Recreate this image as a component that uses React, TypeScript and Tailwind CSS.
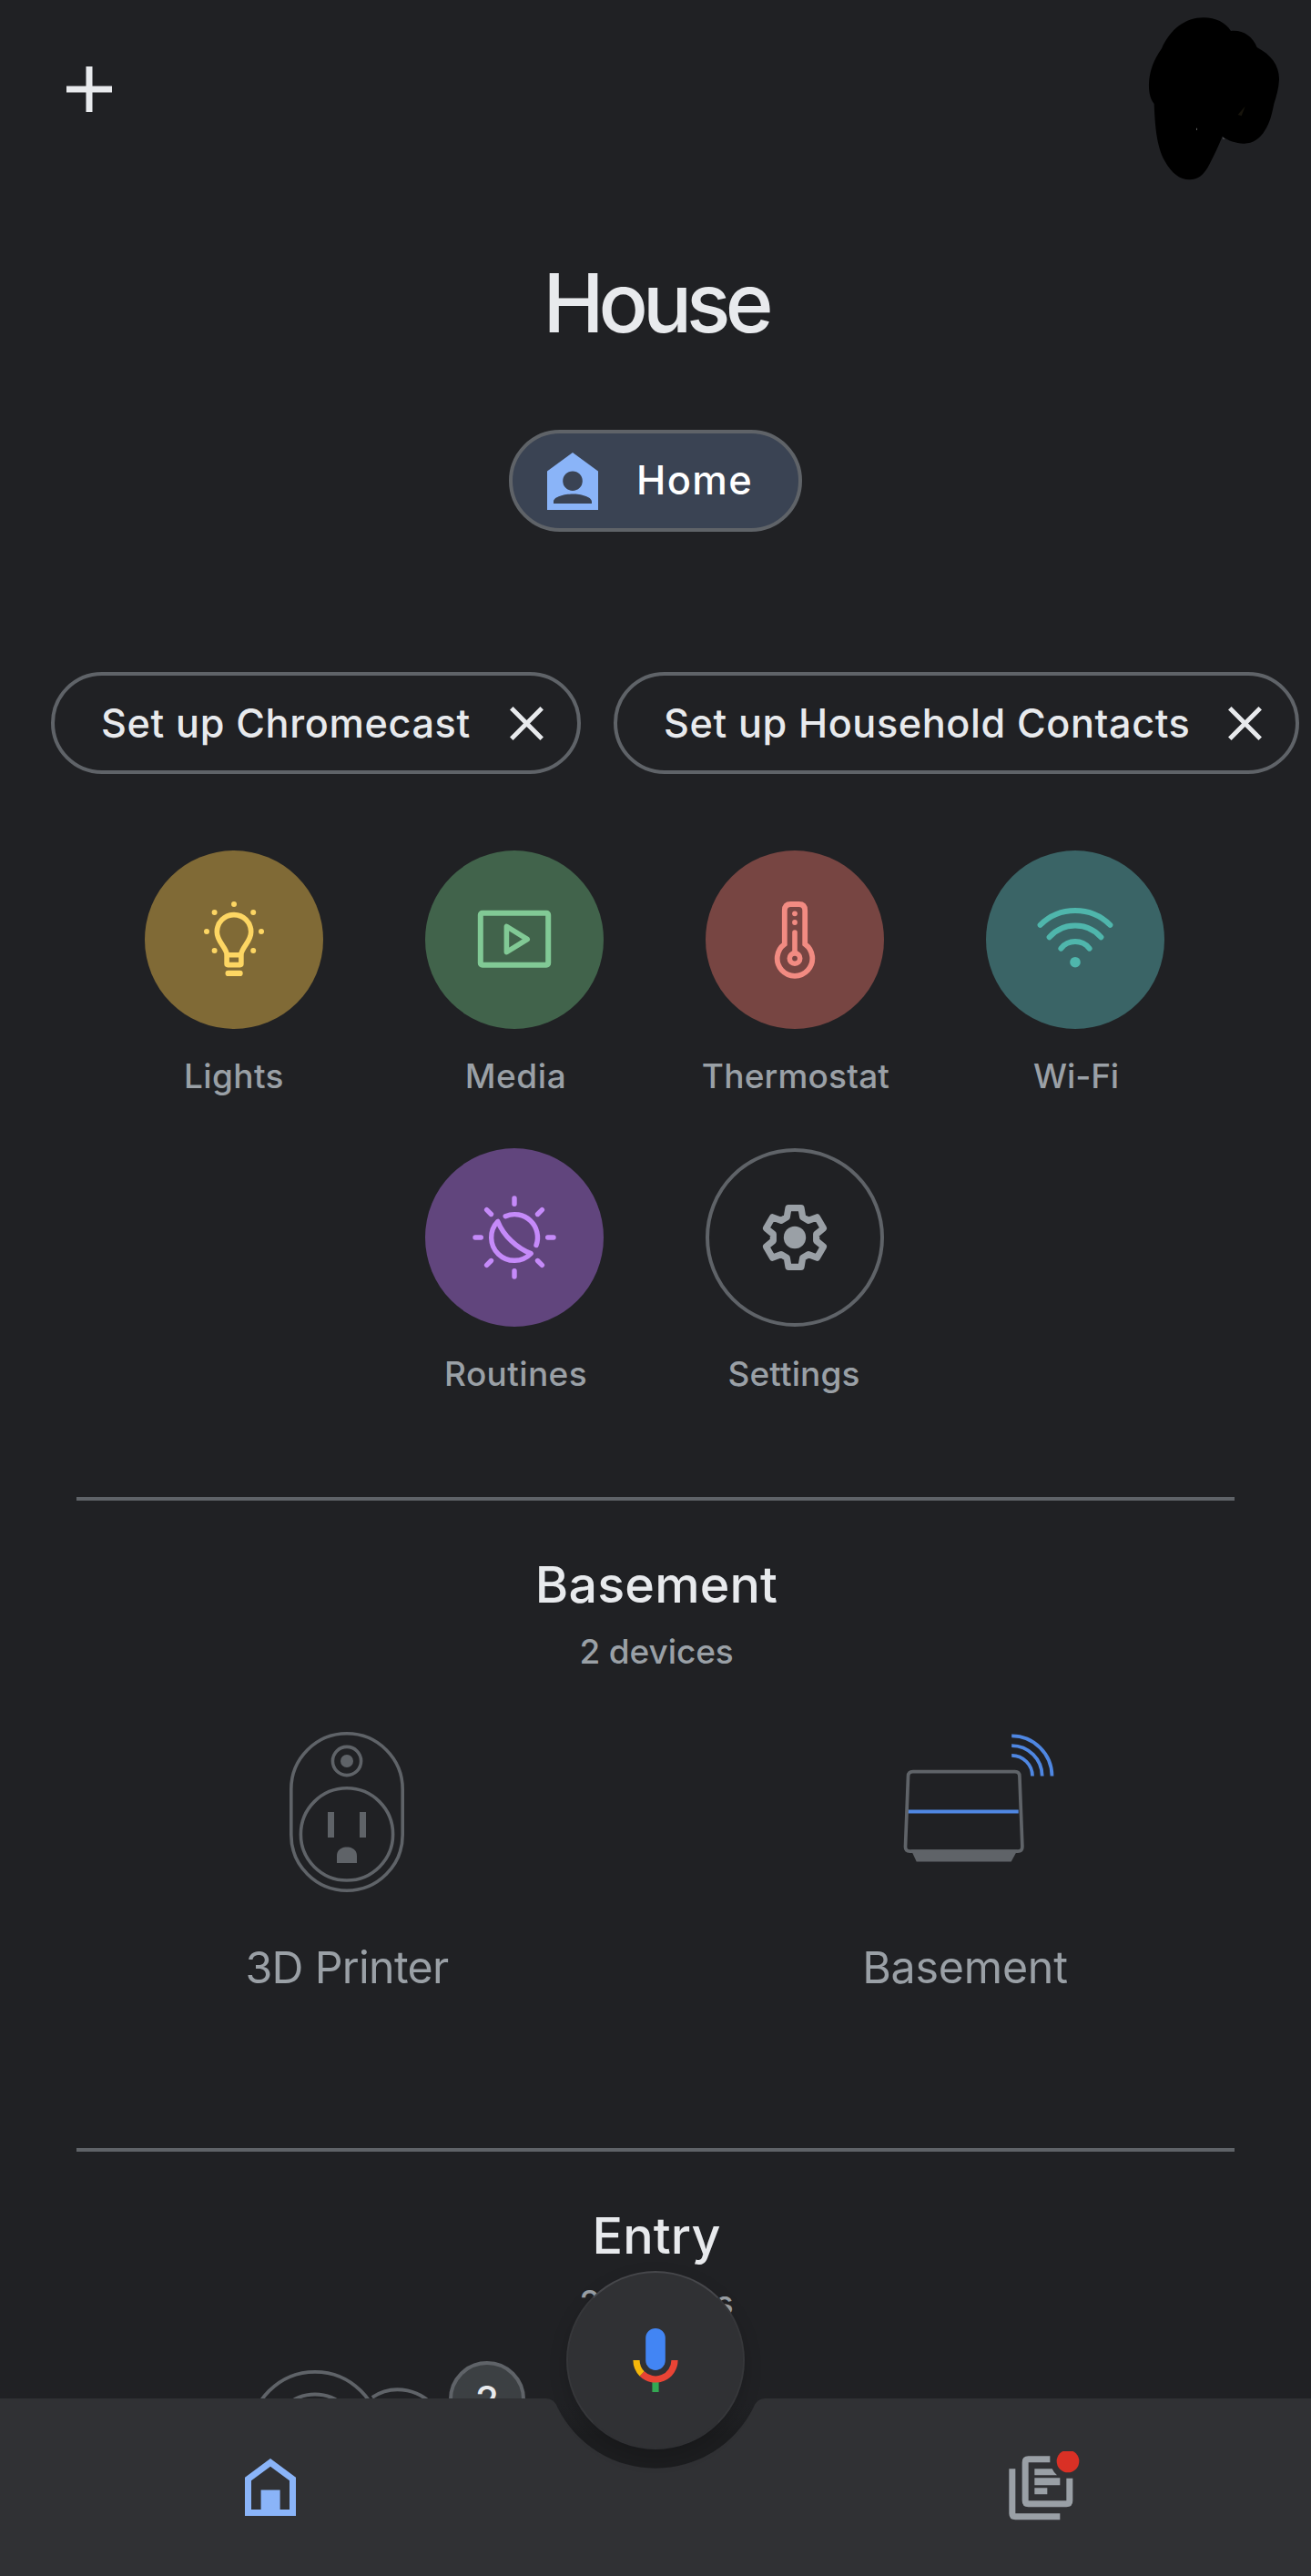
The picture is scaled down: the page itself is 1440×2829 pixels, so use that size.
import type { ReactNode } from 'react';

function PlusIcon() {
  return (
    <svg className="size-[52px]" viewBox="0 0 52 52" stroke="#e8eaed" strokeWidth="7" fill="none">
      <path d="M26 1v50M1 26h50" />
    </svg>
  );
}

function Scribble() {
  return (
    <svg className="absolute left-[1220px] top-0 size-[220px]" viewBox="0 0 660 660">
      <path
        fill="#000"
        d="M168 160C196 96 246 58 306 58C346 58 378 74 396 102C436 98 468 120 482 156C528 180 556 216 555 262C554 290 546 318 538 342C530 382 524 404 508 430C492 458 466 474 438 473C412 472 388 464 368 450C356 478 344 506 326 540C308 576 288 592 260 592C228 592 200 570 178 530C152 484 146 420 143 342C130 326 125 304 126 274C128 230 144 194 168 160Z"
      />
      <path fill="#17140c" d="M443 350l-24 28l12 4z" />
      <path fill="#4a4a4e" d="M368 451l10 7l-8 1z" />
      <path fill="#8a8a8a" d="M282 422h2v7h-2z" />
    </svg>
  );
}

function HomePersonIcon() {
  return (
    <svg className="h-[63px] w-[56px]" viewBox="0 0 56 63">
      <path
        fill="#8ab4f8"
        fillRule="evenodd"
        d="M28 0L56 20.5V63H0V20.5ZM28 20.4a10.8 10.8 0 1 0 0 21.6a10.8 10.8 0 1 0 0-21.6ZM7 56V54C7 48.5 19 45.5 28 45.5S49 48.5 49 54V56Z"
      />
    </svg>
  );
}

function CloseIcon() {
  return (
    <svg className="size-[37px]" viewBox="0 0 37 37" stroke="#e8eaed" strokeWidth="5" fill="none">
      <path d="M1.8 1.8L35.2 35.2M35.2 1.8L1.8 35.2" />
    </svg>
  );
}

function SetupChip({ children, className }: { children: ReactNode; className: string }) {
  return (
    <div
      className={
        'flex h-[112px] shrink-0 items-center justify-between rounded-full border-[4px] border-[#5f6368] pl-[51px] pr-[37px] text-[43.2px] font-medium text-[#e8eaed] ' +
        className
      }
    >
      <span className="whitespace-nowrap">{children}</span>
      <CloseIcon />
    </div>
  );
}

const LightIcon = (
  <svg className="size-[196px]" viewBox="0 0 196 196" fill="none" stroke="#fdd663" strokeWidth="5.6">
    <path d="M90.5 115C89 105 79.3 100.5 79.3 89.3A18.7 18.7 0 0 1 116.7 89.3C116.7 100.5 107 105 105.5 115" />
    <rect x="90.1" y="114.8" width="15.8" height="10.8" rx="1" />
    <path d="M91.6 134.9h13" strokeWidth="6.2" strokeLinecap="round" />
    <g fill="#fdd663" stroke="none">
      <circle cx="98" cy="59" r="3" />
      <circle cx="76.6" cy="68" r="3" />
      <circle cx="119.2" cy="68" r="3" />
      <circle cx="68" cy="89" r="3" />
      <circle cx="128" cy="89" r="3" />
      <circle cx="76.6" cy="110" r="3" />
      <circle cx="119.2" cy="110" r="3" />
    </g>
  </svg>
);

const MediaIcon = (
  <svg className="size-[196px]" viewBox="0 0 196 196" fill="none" stroke="#81c995" strokeWidth="6">
    <rect x="60.8" y="68.7" width="74.4" height="57" rx="2" />
    <path d="M89.4 83.4V111.6L112.2 97.5Z" strokeWidth="5.6" strokeLinejoin="round" />
  </svg>
);

const ThermostatIcon = (
  <svg className="size-[196px]" viewBox="0 0 196 196" fill="none" stroke="#f28b82" strokeWidth="5.8">
    <path d="M86.8 102.8V66Q86.8 59 93.5 59H102.5Q109.2 59 109.2 66V102.8A19.3 19.3 0 1 1 86.8 102.8Z" />
    <path d="M98 90v22" strokeWidth="5.6" strokeLinecap="round" />
    <circle cx="98" cy="118.6" r="5.7" strokeWidth="5.6" />
    <g fill="#f28b82" stroke="none">
      <circle cx="98" cy="69.3" r="2.9" />
      <circle cx="98" cy="79" r="2.9" />
    </g>
  </svg>
);

const WifiIcon = (
  <svg className="size-[196px]" viewBox="0 0 196 196" fill="none" stroke="#4fb6ac" strokeWidth="6" strokeLinecap="round">
    <path d="M59.6 81.8A54.6 54.6 0 0 1 136.4 81.8" />
    <path d="M69.6 95.3A38 38 0 0 1 126.4 95.3" />
    <path d="M82.4 107.6A20 20 0 0 1 113.6 107.6" />
    <circle cx="98" cy="122.7" r="5.8" fill="#4fb6ac" stroke="none" />
  </svg>
);

const RoutinesIcon = (
  <svg
    className="size-[196px]"
    viewBox="0 0 196 196"
    fill="none"
    stroke="#c58af9"
    strokeWidth="5.4"
    strokeLinecap="round"
    strokeLinejoin="round"
  >
    <path d="M98 55v6.3M98 134.7v6.3M55 98h6.3M134.7 98h6.3M67.6 67.6l4.9 4.9M123.5 123.5l4.9 4.9M128.4 67.6l-4.9 4.9M72.5 123.5l-4.9 4.9" />
    <path d="M88.2 74.7A25.3 25.3 0 0 1 122 106.5" />
    <path d="M79.8 80.4A25.3 25.3 0 1 0 116.2 115.6C101 110 86 96 79.8 80.4Z" />
  </svg>
);

const gearTooth = [
  [-8.7, -22.3],
  [-7, -32.3],
  [7, -32.3],
  [8.7, -22.3],
];

const gearPoints = [0, 60, 120, 180, 240, 300]
  .flatMap((deg) => {
    const a = (deg * Math.PI) / 180;
    return gearTooth.map(([x, y]) => {
      const px = 98 + x * Math.cos(a) - y * Math.sin(a);
      const py = 98 + x * Math.sin(a) + y * Math.cos(a);
      return px.toFixed(2) + ',' + py.toFixed(2);
    });
  })
  .join(' ');

const SettingsIcon = (
  <svg className="size-[196px] shrink-0" viewBox="0 0 196 196" fill="none" stroke="#9aa0a6" strokeWidth="7.2" strokeLinejoin="round">
    <polygon points={gearPoints} />
    <circle cx="98" cy="98" r="12.2" fill="#9aa0a6" stroke="none" />
  </svg>
);

function Action({ circle, label, tracking, icon }: { circle: string; label: string; tracking: string; icon: ReactNode }) {
  return (
    <div className="flex h-[327px] w-[308px] flex-col items-center">
      <div className={'flex size-[196px] items-center justify-center rounded-full ' + circle}>{icon}</div>
      <span className={'mt-[30px] text-[37px] font-medium leading-[44px] text-[#9aa0a6] ' + tracking}>{label}</span>
    </div>
  );
}

function OutletIcon() {
  return (
    <svg className="h-[176px] w-[126px]" viewBox="0 0 126 176" fill="none" stroke="#5f6368" strokeWidth="3.6">
      <rect x="1.8" y="1.8" width="122.4" height="172.4" rx="61.2" />
      <circle cx="63" cy="32" r="15.6" />
      <circle cx="63" cy="112.4" r="50.6" />
      <g fill="#5f6368" stroke="none">
        <circle cx="63" cy="32" r="7" />
        <path d="M42 88h7v28h-7zM77 88h7v28h-7zM52 144v-8C52 129.500 57 126.400 63 126.400S74 129.500 74 136V144Z" />
      </g>
    </svg>
  );
}

function RouterIcon() {
  return (
    <svg className="h-[176px] w-[200px]" viewBox="-0.7 -0.6 200 176" fill="none" strokeWidth="3.7">
      <path d="M37 87h122" stroke="#4f87e2" strokeWidth="4" />
      <path stroke="#5f6368" d="M43 43H155.200Q160 43 160.200 48L163.200 125.500Q163.300 130.500 158.300 130.500H39.700Q34.700 130.500 34.800 125.500L37.800 48Q38 43 43 43Z" />
      <path fill="#5f6368" d="M41 129h117l-7 13H47z" />
      <g stroke="#4f87e2" strokeWidth="3.8">
        <path d="M151.500 3.800A44.300 44.300 0 0 1 195.800 48" />
        <path d="M151.500 14.500A33.500 33.500 0 0 1 185 48" />
        <path d="M151.500 25.200A22.800 22.800 0 0 1 174.300 48" />
      </g>
    </svg>
  );
}

function Device({ label, tracking, children }: { label: string; tracking: string; children: ReactNode }) {
  return (
    <div className="flex flex-col items-center">
      {children}
      <span className={'mt-[53px] text-[48.3px] leading-[60px] text-[#9aa0a6] ' + tracking}>{label}</span>
    </div>
  );
}

function RoomHeading({ name, count }: { name: string; count: string }) {
  return (
    <div className="flex flex-col items-center border-t-4 border-[#5f6368] pl-[2px] pt-[57px]">
      <h2 className="text-[55.6px] font-medium leading-[70px] tracking-[0.003em] text-[#e8eaed]">{name}</h2>
      <p className="mt-[17px] text-[37px] font-medium leading-[44px] tracking-[-0.003em] text-[#9aa0a6]">{count}</p>
    </div>
  );
}

function RoutersIcon() {
  return (
    <svg className="h-[80px] w-[220px]" viewBox="272 2600 220 80" fill="none" stroke="#5f6368" strokeWidth="3.8">
      <circle cx="346" cy="2676" r="71.200" />
      <circle cx="346" cy="2676" r="46.500" />
      <path d="M408.800 2632.800A51 51 0 0 1 480 2648" />
    </svg>
  );
}

function HomeTabIcon() {
  return (
    <svg className="h-[63px] w-[56px]" viewBox="0 0 56 63">
      <path fill="#8ab4f8" fillRule="evenodd" d="M28 0L56 20.700V63H0V20.700ZM28 8.700L7 24.300V56H17.600V34.600H38.600V56H49V24.300Z" />
    </svg>
  );
}

function FeedIcon() {
  return (
    <svg className="size-[80px]" viewBox="140 155 240 240">
      <g fill="none" stroke="#9aa0a6" strokeWidth="21">
        <path d="M154.500 213V360Q154.500 370.500 165 370.500H312" />
        <path d="M279 181.500H207.500Q197.500 181.500 197.500 191.500V318Q197.500 328.500 207.500 328.500H333Q343.500 328.500 343.500 318V244" />
      </g>
      <path fill="#9aa0a6" d="M228 213H286Q292 226 302 234H228ZM228 243H312V267H228ZM228 276H270V297H228Z" />
      <circle cx="338" cy="188" r="37" fill="#d93025" />
    </svg>
  );
}

function MicIcon() {
  return (
    <svg className="h-[72px] w-[50px]" viewBox="0 0 50 72" fill="none" strokeWidth="7.200">
      <rect x="14.200" y="0.900" width="21.600" height="46" rx="10.800" fill="#4285f4" />
      <path stroke="#34a853" d="M25 59V71" />
      <path stroke="#e94435" d="M46 36A21 21 0 0 1 10.150 50.850" />
      <path stroke="#f5b70b" d="M4 36A21 21 0 0 0 10.150 50.850" />
    </svg>
  );
}

export default function App() {
  return (
    <div className="relative flex h-[2829px] w-[1440px] flex-col overflow-hidden bg-[#202124] font-['Inter',sans-serif]">
      <header className="flex h-[196px] shrink-0 items-center pl-[72px]">
        <PlusIcon />
        <Scribble />
      </header>

      <h1 className="mt-[82px] text-center text-[90px] font-medium leading-[110px] tracking-[-0.066em] text-[#e8eaed]">House</h1>

      <div className="mx-auto mt-[84px] flex h-[112px] w-[322px] items-center rounded-full border-[4px] border-[#5f6368] bg-[#3a4353] pl-[38px]">
        <HomePersonIcon />
        <span className="ml-[42px] text-[43.4px] font-medium tracking-[0.032em] text-white">Home</span>
      </div>

      <div className="mt-[154px] flex gap-[36px] pl-[56px]">
        <SetupChip className="w-[582px] tracking-[0.015em]">Set up Chromecast</SetupChip>
        <SetupChip className="w-[753px] tracking-[0.014em]">Set up Household Contacts</SetupChip>
      </div>

      <div className="ml-[103px] mt-[84px] flex h-[710px] w-[1232px] flex-wrap content-start justify-center">
        <Action circle="bg-[#806a36]" label="Lights" tracking="tracking-[0.010em]" icon={LightIcon} />
        <Action circle="bg-[#41634b]" label="Media" tracking="pl-[3px] tracking-[0.016em]" icon={MediaIcon} />
        <Action circle="bg-[#774542]" label="Thermostat" tracking="pl-[2px] tracking-[0.005em]" icon={ThermostatIcon} />
        <Action circle="bg-[#3a6466]" label="Wi-Fi" tracking="pl-[2px] tracking-[-0.003em]" icon={WifiIcon} />
        <Action circle="bg-[#61457d]" label="Routines" tracking="pl-[3px] tracking-[0.010em]" icon={RoutinesIcon} />
        <Action circle="border-4 border-[#5f6368]" label="Settings" tracking="pr-[2px] tracking-[0.003em]" icon={SettingsIcon} />
      </div>

      <section className="mx-[84px] h-[715px] shrink-0">
        <RoomHeading name="Basement" count="2 devices" />
        <div className="-mx-[42px] mt-[66px] grid grid-cols-2">
          <Device label="3D Printer" tracking="tracking-[-0.014em]">
            <OutletIcon />
          </Device>
          <Device label="Basement" tracking="pl-[2px] tracking-[-0.004em]">
            <RouterIcon />
          </Device>
        </div>
      </section>

      <section className="mx-[84px] shrink-0">
        <RoomHeading name="Entry" count="2 devices" />
        <div className="ml-[188px] mt-[42px] flex items-start">
          <div className="mt-[7px]">
            <RoutersIcon />
          </div>
          <div className="ml-px flex size-[84px] items-center justify-center rounded-full border-[4px] border-[#5f6368] bg-[#3c4043] text-[42px] font-medium text-[#e8eaed]">
            2
          </div>
        </div>
      </section>

      <nav className="absolute inset-x-0 bottom-0 h-[195px]">
        <svg className="absolute inset-0 h-[195px] w-[1440px]" viewBox="0 0 1440 195">
          <defs>
            <linearGradient id="notch" x1="0" y1="0" x2="0" y2="1">
              <stop offset="0" stopColor="#202124" stopOpacity="0" />
              <stop offset="0.5" stopColor="#1c1d1f" />
              <stop offset="1" stopColor="#1c1d1f" />
            </linearGradient>
          </defs>
          <rect x="600" y="0" width="240" height="80" fill="url(#notch)" />
          <path fill="#303134" d="M0 0H600Q608.500 0 612.500 10A120 120 0 0 0 827.500 10Q831.500 0 840 0H1440V195H0Z" />
        </svg>
        <div className="relative flex h-full items-center justify-between pl-[269px] pr-[253px]">
          <HomeTabIcon />
          <FeedIcon />
        </div>
        <button className="absolute -top-[140px] left-[622px] flex size-[196px] items-center justify-center rounded-full border-2 border-x-[#36373a] border-b-[#303134] border-t-[#46474b] bg-[#303134] shadow-[0_8px_20px_rgba(0,0,0,0.16)]">
          <MicIcon />
        </button>
      </nav>
    </div>
  );
}
